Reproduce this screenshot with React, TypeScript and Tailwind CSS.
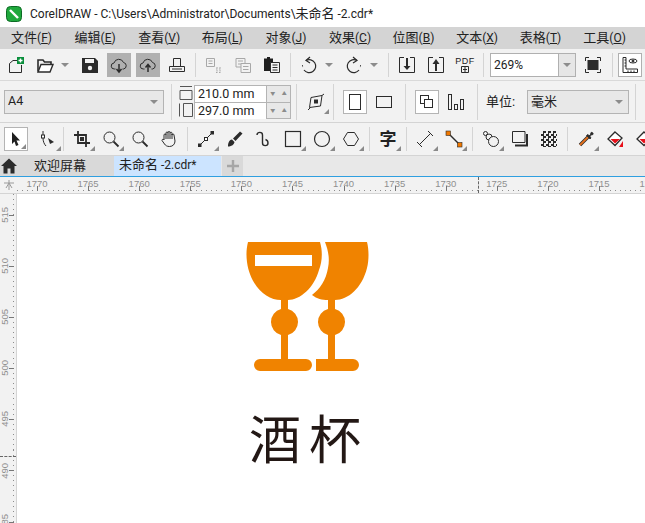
import React from 'react';

const Tri = () => (
  <span className="absolute right-[-5px] bottom-[-4px] w-0 h-0 border-l-[5px] border-b-[5px] border-l-transparent border-b-[#8a8a8a]" />
);

function Tool({ className = '', fly, children }: { className?: string; fly?: boolean; children: React.ReactNode }) {
  return (
    <div className={`relative w-4 h-4 shrink-0 ${className}`}>
      <svg viewBox="0 0 16 16" className="w-4 h-4 overflow-visible" fill="none" stroke="#2b2b2b" strokeWidth="1">
        {children}
      </svg>
      {fly && <Tri />}
    </div>
  );
}

const Box = ({ className = '', children }: { className?: string; children: React.ReactNode }) => (
  <div className={`flex items-center justify-center w-6 h-6 shrink-0 ${className}`}>{children}</div>
);

const Sep = ({ className = '' }: { className?: string }) => <div className={`w-px shrink-0 bg-[#d4d4d4] ${className}`} />;

const Arrow = ({ className = '' }: { className?: string }) => (
  <div className={`w-2 h-1 shrink-0 border-l-4 border-r-4 border-t-4 border-l-transparent border-r-transparent border-t-[#8c8c8c] box-border ${className}`} />
);

const menus: [string, string][] = [
  ['文件', 'F'], ['编辑', 'E'], ['查看', 'V'], ['布局', 'L'], ['对象', 'J'],
  ['效果', 'C'], ['位图', 'B'], ['文本', 'X'], ['表格', 'T'], ['工具', 'O'],
];
const hLabels = [1770, 1765, 1760, 1755, 1750, 1745, 1740, 1735, 1730, 1725, 1720, 1715, 1710];
const vLabels = [515, 510, 505, 500, 495, 490, 485];

export default function App() {
  return (
    <div className="w-[645px] h-[523px] overflow-hidden flex flex-col bg-white text-[#222] font-['Roboto','Noto_Sans_CJK_SC',sans-serif]">
      {/* title bar */}
      <div className="h-[27px] flex items-center pl-[6px] shrink-0">
        <svg viewBox="0 0 16 16" className="w-4 h-4">
          <rect x="0.5" y="0.5" width="15" height="15" rx="4" fill="#1fa83c" stroke="#0d6b25" />
          <path d="M4 4 L12 12" stroke="#fff" strokeWidth="2.4" />
        </svg>
        <span className="ml-2 text-[12px] leading-none whitespace-nowrap">CorelDRAW - C:\Users\Administrator\Documents\<span className="text-[13px]">未命名</span> -2.cdr*</span>
      </div>

      {/* menu */}
      <div className="h-[22px] shrink-0 bg-[#d4d4d4] flex items-center pl-[11px] pb-px text-[13px]">
        {menus.map(([t, k]) => (
          <div key={k} className="w-[63.6px] shrink-0 whitespace-nowrap leading-none">
            {t}<span className="text-[12px]">(<u>{k}</u>)</span>
          </div>
        ))}
      </div>

      {/* standard toolbar */}
      <div className="h-[32px] shrink-0 bg-[#f2f2f2] border-b border-[#d9d9d9] flex items-center pl-2">
        <Tool>
          <path d="M1.5 6.5 L5 3.5 H10 M1.5 6.5 V15.5 H13.5 V8" />
          <rect x="9" y="0" width="7" height="7" fill="#0a8f3c" stroke="none" />
          <path d="M12.5 1.5 V5.5 M10.5 3.5 H14.5" stroke="#fff" strokeWidth="1.4" />
        </Tool>
        <Tool className="ml-[13px]">
          <path d="M1 14.5 V3 H6 L7.5 5 H14 V7" stroke="#2b2b2b" strokeWidth="1.6" />
          <path d="M1 15 L4 7.5 H16 L13 15 Z" fill="#fff" strokeWidth="1.4" />
        </Tool>
        <Arrow className="ml-2" />
        <Tool className="ml-[13px]">
          <path d="M0 1 H13 L16 4 V16 H0 Z" fill="#2b2b2b" stroke="none" />
          <rect x="3" y="2" width="9" height="4" fill="#f2f2f2" stroke="none" />
          <circle cx="8" cy="11" r="2.2" fill="#f2f2f2" stroke="none" />
        </Tool>
        <Box className="ml-[9px] bg-[#b0b0b0]">
          <Tool>
            <path d="M4.5 12 H3.5 A3 3 0 0 1 3 6 A5 5 0 0 1 12.5 5.5 A3.3 3.3 0 0 1 12.5 12 H11.5" />
            <path d="M8 7 V14.5 M5.5 12 L8 15 L10.5 12" strokeWidth="1.5" />
          </Tool>
        </Box>
        <Box className="ml-[5px] bg-[#b0b0b0]">
          <Tool>
            <path d="M4.5 12 H3.5 A3 3 0 0 1 3 6 A5 5 0 0 1 12.5 5.5 A3.3 3.3 0 0 1 12.5 12 H11.5" />
            <path d="M8 15 V8 M5.5 10.5 L8 7.5 L10.5 10.5" strokeWidth="1.5" />
          </Tool>
        </Box>
        <Tool className="ml-[9px]">
          <path d="M4.5 9.5 V1.5 H11.5 V9.5 M0.5 9.5 H15.5 V14.5 H0.5 Z M3 12 H13" />
        </Tool>
        <Sep className="ml-[10px] h-6" />
        <Tool className="ml-[9px]">
          <path d="M1.5 1.5 H9.5 V9.5 H1.5 Z M3.5 4 H7.5 M3.5 6.5 H7.5" stroke="#a8a8a8" />
          <path d="M11 12 H15.5 M11 15.5 H15.5 M12 10 V15 M15 10 V15" stroke="#a8a8a8" strokeDasharray="1.5 1.5" />
        </Tool>
        <Tool className="ml-[14px]">
          <path d="M1 1.5 H10 V10 H1 Z M3 4 H8 M3 7 H8" stroke="#a8a8a8" />
          <path d="M6 6.5 H15.5 V15.5 H6 Z M8 9.5 H13.5 M8 12.5 H13.5" stroke="#a8a8a8" fill="#f2f2f2" />
        </Tool>
        <Tool className="ml-[13px]">
          <path d="M0 1.5 H9 V14 H0 Z" fill="#1f1f1f" stroke="none" />
          <rect x="3" y="0" width="3" height="2" fill="#1f1f1f" stroke="none" />
          <path d="M6.5 5.5 H15.5 V15.5 H6.5 Z" fill="#f2f2f2" />
          <path d="M8.5 8 H13.5 M8.5 10.5 H13.5 M8.5 13 H13.5" />
        </Tool>
        <Sep className="ml-[10px] h-6" />
        <Tool className="ml-[10px]">
          <path d="M5 3.5 A6.5 6.5 0 1 1 3 13" strokeWidth="1.2" />
          <path d="M1.5 8 A6.5 6.5 0 0 0 2 11" strokeDasharray="1.5 1.5" />
          <path d="M9 0 L5 3.5 L9 6" fill="none" strokeWidth="1.2" />
        </Tool>
        <Arrow className="ml-2" />
        <Tool className="ml-[13px]">
          <path d="M11 3.5 A6.5 6.5 0 1 0 13 13" strokeWidth="1.2" />
          <path d="M14.5 8 A6.5 6.5 0 0 1 14 11" strokeDasharray="1.5 1.5" />
          <path d="M7 0 L11 3.5 L7 6" fill="none" strokeWidth="1.2" />
        </Tool>
        <Arrow className="ml-2" />
        <Sep className="ml-[10px] h-6" />
        <Tool className="ml-[10px]">
          <path d="M5 0.5 H0.5 V15.5 H15.5 V0.5 H11" />
          <path d="M8 1 V11" strokeWidth="2" />
          <path d="M4.5 9 H11.5 L8 13 Z" fill="#2b2b2b" stroke="none" />
        </Tool>
        <Tool className="ml-[13px]">
          <path d="M5 0.5 H0.5 V15.5 H15.5 V0.5 H11" />
          <path d="M8 14 V5" strokeWidth="2" />
          <path d="M4.5 7 H11.5 L8 2 Z" fill="#2b2b2b" stroke="none" />
        </Tool>
        <div className="relative w-4 h-4 ml-[13px] shrink-0 flex flex-col items-center justify-between leading-none">
          <span className="text-[9px] leading-[9px] font-['Liberation_Sans',sans-serif] tracking-[0.5px]">PDF</span>
          <svg viewBox="0 0 8 7" className="w-2 h-[7px]" fill="none" stroke="#2b2b2b"><path d="M0.5 0.5 H7.5 V6.5 H0.5 Z M4 1 V6 M2 3.5 H6" /></svg>
        </div>
        <Sep className="ml-[10px] h-6" />
        <div className="ml-[6px] w-[86px] h-[24px] shrink-0 flex border border-[#b0b0b0] bg-white text-[12px]">
          <div className="flex-1 pl-[3px] leading-[22px]">269%</div>
          <div className="w-[17px] bg-[#e6e6e6] border-l border-[#b0b0b0] flex items-center justify-center"><Arrow /></div>
        </div>
        <Tool className="ml-[9px]">
          <path d="M0.5 4 V0.5 H4 M12 0.5 H15.5 V4 M15.5 12 V15.5 H12 M4 15.5 H0.5 V12" />
          <rect x="2.5" y="3" width="11" height="10" fill="#2b2b2b" stroke="none" />
        </Tool>
        <Sep className="ml-[11px] h-6" />
        <Box className="ml-[5px] bg-white border border-[#b0b0b0]">
          <Tool>
            <path d="M1 0.5 H4 V12 H15.5 V15.5 H1 Z M4 3 H2.5 M4 6 H2.5 M4 9 H2.5 M6 15 V13.5 M9 15 V13.5 M12 15 V13.5" />
            <ellipse cx="11" cy="4" rx="4" ry="2" />
            <circle cx="11" cy="4" r="1" fill="#2b2b2b" />
          </Tool>
        </Box>
      </div>

      {/* property bar */}
      <div className="h-[42px] shrink-0 bg-[#f2f2f2] border-b border-[#d4d4d4] flex items-center pl-1">
        <div className="w-[160px] h-6 shrink-0 flex items-center justify-between px-[3px] pr-[5px] bg-[#e8e8e8] border border-[#b4b4b4] text-[12.5px]">
          <span>A4</span>
          <Arrow />
        </div>
        <Sep className="ml-[7px] h-9" />
        <div className="ml-[7px] w-[14px] shrink-0 flex flex-col gap-[3px]">
          <svg viewBox="0 0 14 14" className="w-[14px] h-[14px]" fill="none" stroke="#555"><path d="M1 0.5 H13 M1 4.5 H13 V13.5 H1 Z" /></svg>
          <svg viewBox="0 0 14 14" className="w-[14px] h-[14px]" fill="none" stroke="#555"><path d="M0.5 0.5 V13.5 M4.5 0.5 H13.5 V13.5 H4.5 Z" /></svg>
        </div>
        <div className="ml-[1px] w-[97px] h-[34px] shrink-0 flex flex-col border border-[#b4b4b4] text-[12.5px] bg-[#e8e8e8]">
          {['210.0 mm', '297.0 mm'].map((v, i) => (
            <div key={v} className={`flex flex-1 ${i ? 'border-t border-[#b4b4b4]' : ''}`}>
              <div className="w-[72px] bg-white pl-[3px] leading-[16px] border-r border-[#b4b4b4]">{v}</div>
              <div className="flex-1 flex items-center justify-around text-[5px] text-[#8c8c8c] leading-none">
                <span>▼</span><span>▲</span>
              </div>
            </div>
          ))}
        </div>
        <Sep className="ml-[5px] h-9" />
        <Tool className="ml-[11px]" fly>
          <path d="M3 3.5 L14 1.5 L12.5 12 L1.5 13.5 Z" />
          <rect x="6" y="5.5" width="4" height="4" fill="#2b2b2b" stroke="none" />
          <path d="M0 16 L2.5 13.5 M14 1.5 L16 0" />
        </Tool>
        <Sep className="ml-[9px] h-9" />
        <Box className="ml-[9px] bg-white border border-[#b4b4b4]">
          <svg viewBox="0 0 12 16" className="w-3 h-4" fill="none" stroke="#2b2b2b"><rect x="0.5" y="0.5" width="11" height="15" /></svg>
        </Box>
        <div className="ml-[9px] w-4 h-3 shrink-0 border border-[#2b2b2b]" />
        <Sep className="ml-[13px] h-9" />
        <Box className="ml-[9px] bg-white border border-[#b4b4b4]">
          <Tool>
            <rect x="1.5" y="1.5" width="8" height="8" />
            <rect x="5.5" y="5.5" width="8" height="8" fill="#fff" />
          </Tool>
        </Box>
        <Tool className="ml-[9px]">
          <rect x="0.5" y="0.5" width="3" height="15" />
          <rect x="6.5" y="10.5" width="3" height="5" />
          <rect x="12.5" y="5.5" width="3" height="10" />
        </Tool>
        <Sep className="ml-[13px] h-9" />
        <div className="ml-2 w-[33px] shrink-0 text-[13px] whitespace-nowrap">单位:</div>
        <div className="ml-2 w-[102px] h-6 shrink-0 flex items-center justify-between pl-[3px] pr-[5px] bg-[#e8e8e8] border border-[#b4b4b4] text-[13px]">
          <span>毫米</span>
          <Arrow />
        </div>
        <Sep className="ml-[6px] h-9" />
      </div>

      {/* toolbox */}
      <div className="h-[33px] shrink-0 bg-[#f2f2f2] border-b border-[#d4d4d4] flex items-center pl-1">
        <Box className="relative bg-white border border-[#b4b4b4]">
          <Tool>
            <path d="M4 1 L12 9.5 H8.5 L10.5 14 L8 15 L6.5 10.5 L4 13 Z" fill="#1f1f1f" stroke="none" />
          </Tool>
          <span className="absolute right-[1px] bottom-[1px] w-0 h-0 border-l-[5px] border-b-[5px] border-l-transparent border-b-[#8a8a8a]" />
        </Box>
        <Tool className="ml-3" fly>
          <path d="M3 0 V4 M3 7 C3 10 4 13 6 15" />
          <rect x="1.5" y="4" width="3" height="3" fill="#fff" />
          <path d="M8 7 L14 11 L10 13 Z" fill="#2b2b2b" stroke="none" />
        </Tool>
        <Sep className="ml-[7px] h-6" />
        <Tool className="ml-[10px]" fly>
          <path d="M4 0 V12 H16 M0 4 H12 V16" strokeWidth="1.8" />
          <rect x="6" y="6" width="4" height="4" fill="#2b2b2b" stroke="none" />
        </Tool>
        <Tool className="ml-[13px]" fly>
          <circle cx="6.5" cy="6.5" r="5.5" />
          <path d="M10.5 10.5 L15.5 15.5" strokeWidth="1.8" />
        </Tool>
        <Tool className="ml-[13px]">
          <circle cx="6.5" cy="6.5" r="5.5" />
          <path d="M10.5 10.5 L15.5 15.5" strokeWidth="1.8" />
        </Tool>
        <Tool className="ml-[13px]">
          <path d="M3 9 V4 A1 1 0 0 1 5 4 V2 A1 1 0 0 1 7 2 V1.5 A1 1 0 0 1 9 1.5 V2 A1 1 0 0 1 11 2.5 V4 A1 1 0 0 1 13 4 L14 10 C14 13 12 15.5 8.5 15.5 C6 15.5 4.5 14.5 3.5 13 L1 9.5 C1 8 2.5 8 3 9 Z M5 4 V8 M7 2 V8 M9 2 V8 M11 3 V8" />
        </Tool>
        <Sep className="ml-[10px] h-6" />
        <Tool className="ml-[10px]" fly>
          <path d="M2 14 L14 2" />
          <rect x="0" y="12.5" width="3.5" height="3.5" fill="#2b2b2b" stroke="none" />
          <rect x="6.5" y="6.5" width="3" height="3" fill="#fff" />
          <rect x="12.5" y="0" width="3.5" height="3.5" fill="#2b2b2b" stroke="none" />
        </Tool>
        <Tool className="ml-[13px]">
          <path d="M1 15.5 C1 12 2 9 5 8.5 L7.5 11 C7 14 4 15.5 1 15.5 Z M6 7.5 L13 0.5 L15.5 2.5 L8.5 10 Z" fill="#2b2b2b" stroke="none" />
        </Tool>
        <Tool className="ml-[13px]">
          <path d="M1 4 C1 0.5 6.5 0.5 6.5 4 V12 C6.5 15.5 12 15.5 12 12 C12 10.5 11 9 9.5 8.5" strokeWidth="1.4" />
        </Tool>
        <Tool className="ml-[13px]" fly>
          <rect x="0.5" y="0.5" width="15" height="15" strokeWidth="1.2" />
        </Tool>
        <Tool className="ml-[13px]" fly>
          <circle cx="8" cy="8" r="7.5" strokeWidth="1.2" />
        </Tool>
        <Tool className="ml-[13px]" fly>
          <path d="M4.5 1.5 H11.5 L15.5 8 L11.5 14.5 H4.5 L0.5 8 Z" />
        </Tool>
        <Sep className="ml-[10px] h-6" />
        <div className="relative ml-[10px] w-4 h-4 shrink-0 flex items-center justify-center text-[17px] font-bold leading-none">
          字
          <Tri />
        </div>
        <Sep className="ml-[10px] h-6" />
        <Tool className="ml-[10px]" fly>
          <path d="M2.5 13.5 L13.5 2.5 M0 11 L5 16 M11 0 L16 5" />
        </Tool>
        <Tool className="ml-[13px]" fly>
          <path d="M3 3 L13 13" strokeWidth="1.4" />
          <rect x="0" y="0" width="4.5" height="4.5" fill="#f07800" stroke="#2b2b2b" strokeWidth="0.6" />
          <rect x="11.5" y="11.5" width="4.5" height="4.5" fill="#f07800" stroke="#2b2b2b" strokeWidth="0.6" />
        </Tool>
        <Sep className="ml-[10px] h-6" />
        <Tool className="ml-[10px]" fly>
          <circle cx="2.5" cy="2.5" r="2" />
          <circle cx="6" cy="6" r="3" />
          <circle cx="10.5" cy="10.5" r="5" fill="#f2f2f2" />
        </Tool>
        <Tool className="ml-[13px]">
          <path d="M2 0.5 H13 V11.5 H0.5 V0.5 Z" />
          <path d="M15 3 V14.5 H3" strokeWidth="2" />
        </Tool>
        <div className="ml-[13px] w-4 h-4 shrink-0 bg-[#2b2b2b] bg-[repeating-conic-gradient(#2b2b2b_0_25%,#f2f2f2_0_50%)] bg-[length:5px_5px]" />
        <Sep className="ml-[10px] h-6" />
        <Tool className="ml-[10px]" fly>
          <path d="M2 14 L10 6" stroke="#2b2b2b" strokeWidth="3.4" />
          <path d="M2 14 L10 6" stroke="#e5701c" strokeWidth="1.8" />
          <path d="M9.5 3.5 L12 5 L13 1.5 A1.5 1.5 0 0 1 15 3.5 L11.5 4.5 L13 7 L12 8 L8.5 4.5 Z" fill="#2b2b2b" stroke="#2b2b2b" strokeWidth="0.8" />
        </Tool>
        <Tool className="ml-[13px]">
          <path d="M8 1 L15 7 L8 14.5 L1 8 Z" fill="#fff" strokeWidth="1.3" />
          <path d="M3.5 8 H13 L8 12.5 Z" fill="#e8101a" stroke="none" />
          <path d="M12 16 L16 10 V16 Z" fill="#e8101a" stroke="none" />
        </Tool>
        <Tool className="ml-[13px]">
          <path d="M8 1 L15 7 L8 14.5 L1 8 Z" fill="#fff" strokeWidth="1.3" />
          <path d="M3.5 8 H13 L8 12.5 Z" fill="#e8101a" stroke="none" />
        </Tool>
      </div>

      {/* tabs */}
      <div className="h-[21px] shrink-0 flex bg-[#e8e8e8] border-b border-[#2f9fe0] text-[13px] leading-[18px]">
        <div className="w-[114px] shrink-0 bg-[#d9d9d9] flex items-center pl-[1px]">
          <svg viewBox="0 0 16 16" className="w-4 h-4 shrink-0">
            <path d="M8 0.5 L16 8 H13.5 V15.5 H9.5 V10.5 H6.5 V15.5 H2.5 V8 H0 Z" fill="#2b2b2b" />
          </svg>
          <span className="ml-[17px] whitespace-nowrap">欢迎屏幕</span>
        </div>
        <div className="w-[107px] shrink-0 bg-[#cce4ff] pl-[5px] whitespace-nowrap">未命名<span className="text-[12px]"> -2.cdr*</span></div>
        <div className="ml-px w-[21px] shrink-0 bg-[#d9d9d9] flex items-center justify-center">
          <svg viewBox="0 0 12 12" className="w-3 h-3"><path d="M6 0 V12 M0 6 H12" stroke="#a6a6a6" strokeWidth="2.4" /></svg>
        </div>
      </div>

      {/* horizontal ruler */}
      <div className="relative h-[17px] shrink-0 bg-[#f2f2f2] border-b border-[#d4d4d4] overflow-hidden">
        <div className="absolute left-[17px] right-0 bottom-[2px] h-px bg-[repeating-linear-gradient(90deg,#8c8c8c_0,#8c8c8c_1px,transparent_1px,transparent_5.11px)]" />
        <div className="flex ml-[11.45px] h-full">
          {hLabels.map((n) => (
            <div key={n} className="relative w-[51.1px] shrink-0 flex justify-center">
              <span className="text-[9.5px] leading-none pt-[2px] text-[#8f8f8f] font-['Liberation_Sans',sans-serif]">{n}</span>
              <span className="absolute left-1/2 bottom-[2px] w-px h-[5px] bg-[#777]" />
            </div>
          ))}
        </div>
        <div className="absolute left-0 top-0 w-[17px] h-full bg-[#f2f2f2] flex items-center justify-center">
          <svg viewBox="0 0 10 10" className="w-[10px] h-[10px]" fill="none" stroke="#9a9a9a"><path d="M5 0 V10 M0 3 H10 M2 8 L5 3 L8 8" /></svg>
        </div>
        <div className="absolute left-[478px] top-0 h-full border-l border-dashed border-[#666]" />
      </div>

      {/* vertical ruler and page */}
      <div className="flex-1 min-h-0 flex">
        <div className="relative w-[17px] shrink-0 bg-[#f2f2f2] border-r border-[#d4d4d4] overflow-hidden">
          <div className="absolute top-0 bottom-0 right-[2px] w-px bg-[repeating-linear-gradient(180deg,#8c8c8c_0,#8c8c8c_1px,transparent_1px,transparent_5.11px)]" />
          <div className="flex flex-col -mt-[4.55px]">
            {vLabels.map((n) => (
              <div key={n} className="relative h-[51.1px] shrink-0 flex items-center">
                <span className="[writing-mode:vertical-rl] rotate-180 text-[9.5px] leading-none pl-[1px] text-[#8f8f8f] font-['Liberation_Sans',sans-serif]">{n}</span>
                <span className="absolute top-1/2 right-[2px] h-px w-[5px] bg-[#777]" />
              </div>
            ))}
          </div>
          <div className="absolute left-0 right-0 top-[262px] border-t border-dashed border-[#666]" />
        </div>
        <div className="relative flex-1 bg-white">
          {/* logo on the page */}
          <svg viewBox="245 240 125 135" className="absolute left-[228px] top-[46px] w-[125px] h-[135px]" fill="#f08300">
            <path fillRule="evenodd" d="M248 242 H320 C323 252 322 262 319 270 C314 288 300 300 288 300 V308.96 A13.5 13.5 0 0 1 288 335.04 V359 H306 A6 6 0 0 1 306 371 H260 A6 6 0 0 1 260 359 H281 V335.04 A13.5 13.5 0 0 1 281 308.96 V300 C266 300 250 285 247 262 C246 254 246.5 248 248 242 Z M255 255 V266 H312 V255 Z" />
            <path d="M325 242 H367 C369 250 369 260 367 268 C362 288 348 300 335 300 V308.96 A13.5 13.5 0 0 1 335 335.04 V359 H353 A6 6 0 0 1 353 371 H316 V359 H328 V335.04 A13.5 13.5 0 0 1 328 308.96 V300 C322 300 317 299 312 295 C320 289 326 280 328 268 C330 258 328 250 325 242 Z" />
          </svg>
          <div className="absolute left-[232px] top-[217px] text-[52px] leading-none tracking-[8px] text-[#231815] whitespace-nowrap font-['Noto_Sans_CJK_SC',sans-serif]">酒杯</div>
        </div>
      </div>
    </div>
  );
}
